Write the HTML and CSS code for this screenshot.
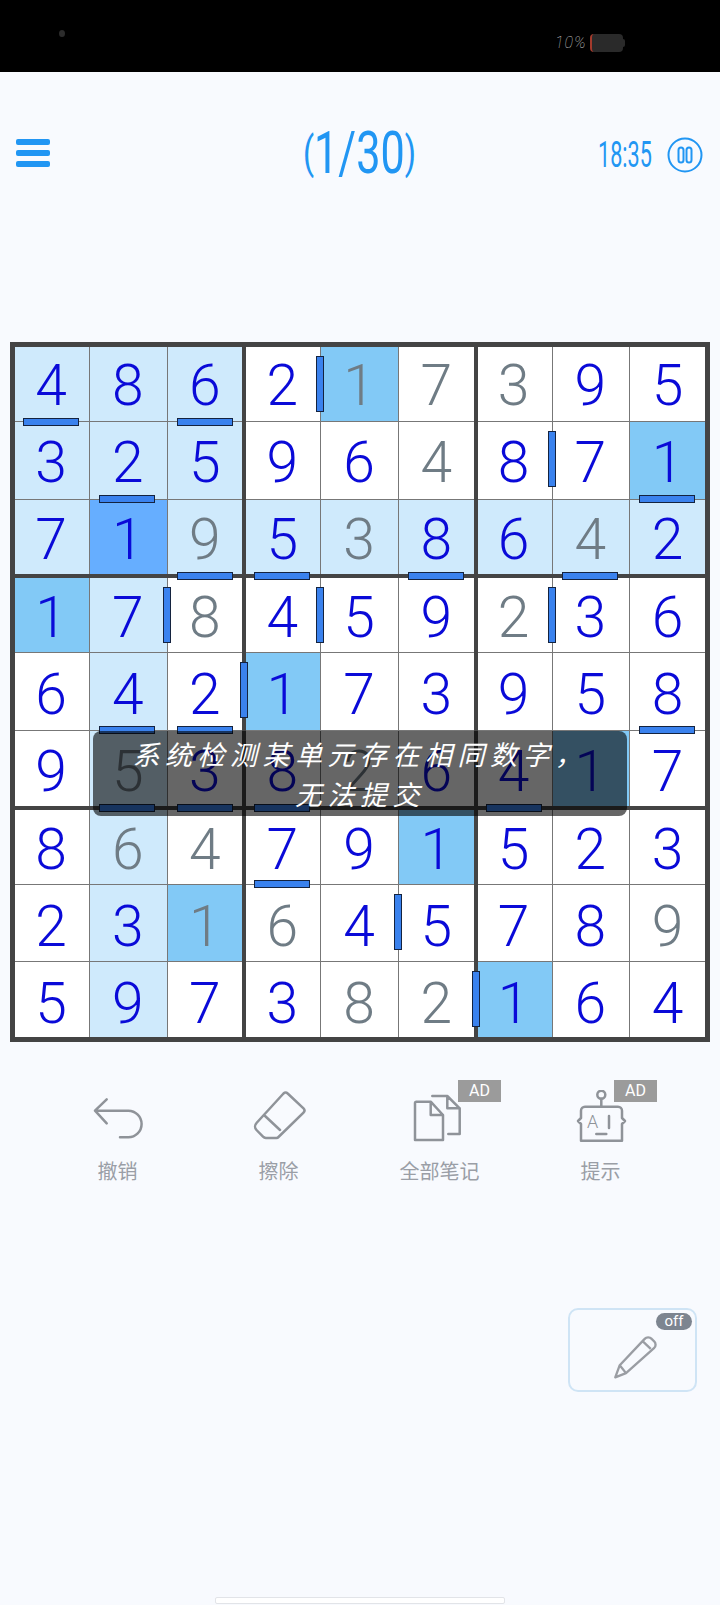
FILE: index.html
```html
<!DOCTYPE html>
<html lang="zh">
<head>
  <meta charset="UTF-8">
  <meta name="viewport" content="width=device-width, initial-scale=1">
  <title>数独</title>
  <link rel="stylesheet" href="styles.css">
</head>
<body>

  <div class="status-bar">
    <span class="camera"></span>
    <span class="battery-text">10%</span>
    <span class="battery"></span>
  </div>

  <header class="top-bar">
    <div class="menu"><span></span><span></span><span></span></div>
    <div class="level"><span><b>(</b>1/30<b>)</b></span></div>
    <div class="timer">
      <span class="clock">18:35</span>
      <svg width="36" height="36" viewBox="0 0 36 36" fill="none" stroke="#2196f3" stroke-width="2">
        <circle cx="18" cy="18" r="16.5"/>
        <rect x="11.5" y="10.5" width="5" height="15" rx="2.5"/>
        <rect x="19.5" y="10.5" width="5" height="15" rx="2.5"/>
      </svg>
    </div>
  </header>

  <div class="board">
    <div class="block">
      <div class="cell hl">4<i class="bar-b"></i></div><div class="cell hl">8</div><div class="cell hl">6<i class="bar-b"></i></div>
      <div class="cell hl">3</div><div class="cell hl">2<i class="bar-b"></i></div><div class="cell hl">5</div>
      <div class="cell hl">7</div><div class="cell sel">1</div><div class="cell hl g">9<i class="bar-b"></i></div>
    </div>
    <div class="block">
      <div class="cell">2<i class="bar-r"></i></div><div class="cell one g">1</div><div class="cell g">7</div>
      <div class="cell">9</div><div class="cell">6</div><div class="cell g">4</div>
      <div class="cell hl">5<i class="bar-b"></i></div><div class="cell hl g">3</div><div class="cell hl">8<i class="bar-b"></i></div>
    </div>
    <div class="block">
      <div class="cell g">3</div><div class="cell">9</div><div class="cell">5</div>
      <div class="cell">8<i class="bar-r"></i></div><div class="cell">7</div><div class="cell one">1<i class="bar-b"></i></div>
      <div class="cell hl">6</div><div class="cell hl g">4<i class="bar-b"></i></div><div class="cell hl">2</div>
    </div>
    <div class="block">
      <div class="cell one">1</div><div class="cell hl">7<i class="bar-r"></i></div><div class="cell g">8</div>
      <div class="cell">6</div><div class="cell hl">4<i class="bar-b"></i></div><div class="cell">2<i class="bar-b"></i><i class="bar-r"></i></div>
      <div class="cell">9</div><div class="cell hl g">5<i class="bar-b"></i></div><div class="cell">3<i class="bar-b"></i></div>
    </div>
    <div class="block">
      <div class="cell">4<i class="bar-r"></i></div><div class="cell">5</div><div class="cell">9</div>
      <div class="cell one">1</div><div class="cell">7</div><div class="cell">3</div>
      <div class="cell">8<i class="bar-b"></i></div><div class="cell g">2</div><div class="cell">6</div>
    </div>
    <div class="block">
      <div class="cell g">2<i class="bar-r"></i></div><div class="cell">3</div><div class="cell">6</div>
      <div class="cell">9</div><div class="cell">5</div><div class="cell">8<i class="bar-b"></i></div>
      <div class="cell">4<i class="bar-b"></i></div><div class="cell one">1</div><div class="cell">7</div>
    </div>
    <div class="block">
      <div class="cell">8</div><div class="cell hl g">6</div><div class="cell g">4</div>
      <div class="cell">2</div><div class="cell hl">3</div><div class="cell one g">1</div>
      <div class="cell">5</div><div class="cell hl">9</div><div class="cell">7</div>
    </div>
    <div class="block">
      <div class="cell">7<i class="bar-b"></i></div><div class="cell">9</div><div class="cell one">1</div>
      <div class="cell g">6</div><div class="cell">4<i class="bar-r"></i></div><div class="cell">5</div>
      <div class="cell">3</div><div class="cell g">8</div><div class="cell g">2<i class="bar-r"></i></div>
    </div>
    <div class="block">
      <div class="cell">5</div><div class="cell">2</div><div class="cell">3</div>
      <div class="cell">7</div><div class="cell">8</div><div class="cell g">9</div>
      <div class="cell one">1</div><div class="cell">6</div><div class="cell">4</div>
    </div>

    <div class="toast">系统检测某单元存在相同数字，<br>无法提交</div>
  </div>

  <div class="tools">
    <div class="tool">
      <svg class="tool-icon" width="60" height="52" viewBox="0 0 60 52">
        <path d="M18.7 9.3 7 20.7l11.7 12.6M7 20.7h33.3a13.3 13.3 0 0 1 0 26.6H32"/>
      </svg>
      <span>撤销</span>
    </div>
    <div class="tool">
      <svg class="tool-icon" width="60" height="52" viewBox="0 0 60 52">
        <path d="M34.5 3.5a3 3 0 0 1 4.2 0L54.5 18.3a3 3 0 0 1 0 4.2L29.5 47a3 3 0 0 1-2 .9H17a4 4 0 0 1-3-1.2L7.5 40a5 5 0 0 1 0-7ZM15 25l16 15"/>
      </svg>
      <span>擦除</span>
    </div>
    <div class="tool">
      <svg class="tool-icon" width="60" height="52" viewBox="0 0 60 52">
        <path d="M22.3 6h15l12.400 12.300V44H38.300M37.300 6v12.300h12.400M6.500 11.700h14.200L33 25v25H5V13a1.300 1.300 0 0 1 1.500-1.300ZM20.700 11.700V25H33"/>
      </svg>
      <em class="ad">AD</em>
      <span>全部笔记</span>
    </div>
    <div class="tool">
      <svg class="tool-icon" width="60" height="52" viewBox="0 0 60 52">
        <circle cx="30.300" cy="4.700" r="4"/>
        <path d="M30.300 8.700v8M14 16.700h33a4 4 0 0 1 4 4V28l3 3-3 3v16.700H10V34l-3-3 3-3v-7.300a4 4 0 0 1 4-4ZM25.300 44h10M38 26v12"/>
        <text x="16" y="38" class="ai-text">A</text>
      </svg>
      <em class="ad ad-hint">AD</em>
      <span>提示</span>
    </div>
  </div>

  <div class="pencil-row">
    <div class="pencil-box">
      <em class="off">off</em>
      <svg class="pencil" width="56" height="56" viewBox="0 0 60 60">
        <path d="M11 55l4.800-13L42.500 13.800a5 5 0 0 1 7.500 0l2.500 2.500a5 5 0 0 1 0 7.500L22.500 50.500ZM15.800 42l6.700 8.500M40 16l9 8.500"/>
      </svg>
    </div>
  </div>

  <div class="home-bar"></div>

</body>
</html>
```

FILE: styles.css
```css
/* Basic Reset */
* { margin: 0; padding: 0; box-sizing: border-box; }
html, body { height: 1605px; overflow: hidden; }
body {
  font-family: Roboto, "Noto Sans CJK SC", sans-serif;
  background: #f8fafe;
}

/* status bar */
.status-bar {
  height: 72px;
  background: #000;
  display: flex;
  align-items: center;
  position: relative;
  padding-left: 59px;
}
.camera {
  width: 6px;
  height: 7px;
  border-radius: 50%;
  background: #2c2c2c;
  margin-bottom: 5px;
}
.battery-text {
  margin: 12px 0 0 490px;
  width: 35px;
  font-size: 16px;
  font-weight: 100;
  font-style: italic;
  letter-spacing: 1px;
  color: #c8c8c8;
}
.battery {
  position: relative;
  width: 33px;
  height: 18px;
  border-radius: 4px;
  background: #2a2a2a;
  border-left: 2px solid #a33a2c;
  margin: 14px 0 0 0;
}
.battery::after {
  content: "";
  position: absolute;
  right: -2px;
  top: 5px;
  width: 2px;
  height: 8px;
  border-radius: 0 2px 2px 0;
  background: #2a2a2a;
}

/* top bar */
.top-bar {
  height: 166px;
  display: grid;
  grid-template-columns: 1fr auto 1fr;
  align-items: center;
  padding: 0 17px 0 16px;
  color: #2196f3;
}
.menu {
  display: flex;
  flex-direction: column;
  gap: 5px;
  margin-top: -5px;
}
.menu span {
  width: 34px;
  height: 6px;
  border-radius: 2px;
  background: #2196f3;
}
.level {
  width: 112px;
  text-align: center;
  font-size: 60px;
  font-weight: 400;
  line-height: 60px;
  margin-top: -4px;
}
.level span {
  display: inline-block;
  white-space: nowrap;
  margin: 0 -40px;
  transform: scaleX(0.72);
}
.level b {
  font-size: 45px;
  font-weight: 400;
  vertical-align: 5px;
}
.timer {
  display: flex;
  align-items: center;
  justify-content: flex-end;
  gap: 16px;
}
.clock {
  font-size: 36px;
  line-height: 36px;
  width: 53px;
  white-space: nowrap;
  transform: scaleX(0.6);
  transform-origin: left center;
}

/* board */
.board {
  position: relative;
  width: 700px;
  height: 700px;
  margin: 104px 0 0 10px;
  padding: 5px;
  background: #444;
  display: grid;
  grid-template-columns: repeat(3, 1fr);
  grid-template-rows: repeat(3, 1fr);
  gap: 4px;
}
.block {
  display: grid;
  grid-template-columns: 74px 76.5px 1fr;
  grid-template-rows: 74px 76.5px 1fr;
  gap: 1px;
  background: #777;
}
.cell {
  position: relative;
  display: flex;
  align-items: center;
  justify-content: center;
  background: #fff;
  color: #0a0ad8;
  font-size: 57px;
  font-weight: 300;
}
/* digits sit on an even pitch, the lines don't */
.cell:nth-child(3n+1) { padding-right: 2px; }
.cell:nth-child(3n+2) { padding-right: 1px; }
.block:nth-child(-n+3) .cell { padding-top: 3px; }
.block:nth-child(-n+3) .cell:nth-child(n+4) { padding-top: 5px; }
.block:nth-child(-n+3) .cell:nth-child(n+7) { padding-top: 6px; }
.block:nth-child(n+4) .cell { padding-top: 4px; }
.block:nth-child(n+4) .cell:nth-child(n+4) { padding-top: 6px; }
.block:nth-child(n+4) .cell:nth-child(n+7) { padding-top: 6.5px; }
.block:nth-child(n+7) .cell { padding-top: 5.5px; }
.block:nth-child(n+7) .cell:nth-child(n+4) { padding-top: 8px; }
.block:nth-child(n+7) .cell:nth-child(n+7) { padding-top: 8px; }

.cell.g { color: #6f7c85; }
.cell.hl { background: #cfeafc; }
.cell.one { background: #82c9f6; }
.cell.sel { background: #66aeff; }

.bar-b, .bar-r {
  position: absolute;
  z-index: 1;
  background: #3a82ee;
  border: 1px solid #14233f;
}
.bar-b {
  left: 9px;
  bottom: -4.5px;
  width: 56px;
  height: 8px;
}
.bar-r {
  top: 9px;
  right: -4px;
  width: 8px;
  height: 56px;
}
.cell:nth-child(3n+1) .bar-b { left: 8px; }
.cell:nth-child(n+7) .bar-b { bottom: -6px; }
.cell:nth-child(3n) .bar-r { right: -6px; }

.toast {
  position: absolute;
  z-index: 2;
  left: 83px;
  top: 389px;
  width: 534px;
  height: 85px;
  padding-top: 3px;
  border-radius: 8px;
  background: rgba(0, 0, 0, 0.6);
  color: #fff;
  font-family: "Noto Sans CJK SC", sans-serif;
  font-size: 27px;
  font-weight: 400;
  font-style: italic;
  line-height: 40px;
  letter-spacing: 5.5px;
  text-align: center;
}

/* tools */
.tools {
  display: flex;
  padding: 0 37px;
  margin-top: 48px;
}
.tool {
  position: relative;
  width: 161px;
  display: flex;
  flex-direction: column;
  align-items: center;
  color: #9a9ea6;
  font-family: "Noto Sans CJK SC", sans-serif;
  font-size: 20px;
  line-height: 26px;
}
.tool span { margin-top: 16px; }
.tool-icon {
  fill: none;
  stroke: #8f9399;
  stroke-width: 2.5;
  stroke-linecap: round;
  stroke-linejoin: round;
}
.ai-text {
  font-family: Roboto, sans-serif;
  font-size: 18px;
  font-weight: 300;
  fill: #8f9399;
  stroke: none;
}
.ad {
  position: absolute;
  left: 99px;
  top: -10px;
  width: 43px;
  height: 22px;
  background: #9b9b9b;
  color: #fff;
  font-family: Roboto, sans-serif;
  font-size: 16px;
  font-style: normal;
  line-height: 22px;
  text-align: center;
}
.ad-hint { left: 94px; }

/* pencil toggle */
.pencil-row {
  display: flex;
  justify-content: flex-end;
  padding-right: 23px;
  margin-top: 124px;
}
.pencil-box {
  position: relative;
  width: 129px;
  height: 84px;
  display: flex;
  align-items: center;
  justify-content: center;
  border: 2px solid #cfe4f5;
  border-radius: 10px;
}
.pencil {
  fill: none;
  stroke: #9a9da3;
  stroke-width: 2.5;
  stroke-linejoin: round;
  margin: 7px 0 0 0;
}
.off {
  position: absolute;
  top: 3px;
  right: 3px;
  width: 36px;
  height: 17px;
  border-radius: 9px;
  background: #7d8590;
  color: #fff;
  font-size: 15px;
  font-style: normal;
  line-height: 16px;
  text-align: center;
}

.home-bar {
  width: 290px;
  height: 7px;
  margin: 205px auto 0;
  background: #fff;
  border: 1px solid #e2e4e8;
  border-radius: 2px;
}
```
